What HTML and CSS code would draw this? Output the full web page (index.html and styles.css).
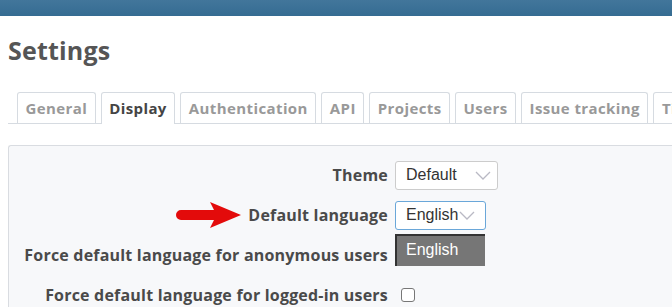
FILE: index.html
```html
<!DOCTYPE html>
<html>
<head>
<meta charset="utf-8">
<link rel="stylesheet" href="styles.css">
</head>
<body>
<div class="topbar"></div>
<div class="content">
  <h2 class="title">Settings</h2>
  <div class="tabs">
    <a class="tab">General</a>
    <a class="tab selected">Display</a>
    <a class="tab">Authentication</a>
    <a class="tab">API</a>
    <a class="tab">Projects</a>
    <a class="tab">Users</a>
    <a class="tab">Issue tracking</a>
    <a class="tab">Time tracking</a>
  </div>
  <div class="box">
    <div class="row">
      <label class="label">Theme</label>
      <div class="field">
        <div class="select theme">Default<svg class="chev" width="16" height="9" viewBox="0 0 16 9"><path d="M1 1 L8 8 L15 1" fill="none" stroke="#b9b9c4" stroke-width="1.3"/></svg></div>
      </div>
    </div>
    <div class="row">
      <label class="label">Default language</label>
      <div class="field">
        <div class="select lang focus">English<svg class="chev" width="16" height="9" viewBox="0 0 16 9"><path d="M1 1 L8 8 L15 1" fill="none" stroke="#b9b9c4" stroke-width="1.3"/></svg></div>
        <div class="dropdown">English</div>
      </div>
      <svg class="arrow" width="70" height="26" viewBox="0 0 70 26"><path d="M5 8 L38 8 L34 0 L65 13 L34 26 L38 18 L5 18 A5 5 0 0 1 5 8 Z" fill="#e30b0b"/></svg>
    </div>
    <div class="row">
      <label class="label">Force default language for anonymous users</label>
      <div class="field"></div>
    </div>
    <div class="row">
      <label class="label">Force default language for logged-in users</label>
      <div class="field"><span class="checkbox"></span></div>
    </div>
  </div>
</div>
</body>
</html>
```
FILE: styles.css
```css
html, body { margin: 0; padding: 0; background: #fff; overflow: hidden; }
body { width: 672px; height: 307px; font-family: "Open Sans", "Noto Sans", sans-serif; color: #484848; }
.topbar { height: 16px; background: linear-gradient(#42769b, #356c92); }
.content { padding: 0 0 0 8px; overflow: hidden; height: 291px; }
.title { margin: 0; padding-top: 17px; height: 59px; box-sizing: border-box; font-size: 25px; font-weight: 700; color: #555; line-height: 34px; letter-spacing: 0.2px; }
.tabs { display: flex; gap: 5px; padding-left: 9px; border-bottom: 1px solid #d6dbe1; height: 31px; white-space: nowrap; margin-top: 17px; }
.tab { display: block; flex: none; height: 31px; box-sizing: border-box; padding: 0 7.5px; border: 1px solid #d6dbe1; border-bottom: none; border-radius: 3px 3px 0 0; background: #fff; font-size: 15px; font-weight: 700; color: #999; line-height: 31px; letter-spacing: 0.4px; }
.tab.selected { color: #444; height: 32px; }
.box { margin-top: 21px; background: #f7f8fa; border: 1px solid #d9dce1; border-right: none; border-radius: 3px 0 0 0; height: 200px; padding-top: 9px; }
.row { position: relative; display: grid; grid-template-columns: 379px 1fr; column-gap: 7px; align-items: center; height: 40px; }
.label { text-align: right; font-size: 16px; font-weight: 700; color: #4a4a4a; white-space: nowrap; letter-spacing: 0.2px; }
.field { position: relative; height: 29px; display: flex; align-items: center; }
.select { box-sizing: border-box; height: 29px; border: 1px solid #ccc; border-radius: 3px; background: #fff; font-family: "Liberation Sans", Arial, sans-serif; font-size: 16px; color: #333; display: flex; align-items: center; padding-left: 10px; }
.select.theme { width: 103px; }
.select.theme .chev { margin-left: 18px; }
.select.lang { width: 91px; border-color: #6aa7d9; }
.select.lang .chev { margin-left: 1px; }
.dropdown { position: absolute; left: 0; top: 33px; width: 90px; height: 32px; box-sizing: border-box; background: #767676; border-left: 2px solid #333; border-top: 2px solid #333; color: #fff; font-family: "Liberation Sans", Arial, sans-serif; font-size: 16px; padding-left: 9px; line-height: 27px; z-index: 2; }
.arrow { position: absolute; left: 167px; top: 7px; }
.checkbox { display: block; margin-left: 6px; width: 12px; height: 12px; border: 1px solid #777; border-radius: 3px; background: #fff; }
```
